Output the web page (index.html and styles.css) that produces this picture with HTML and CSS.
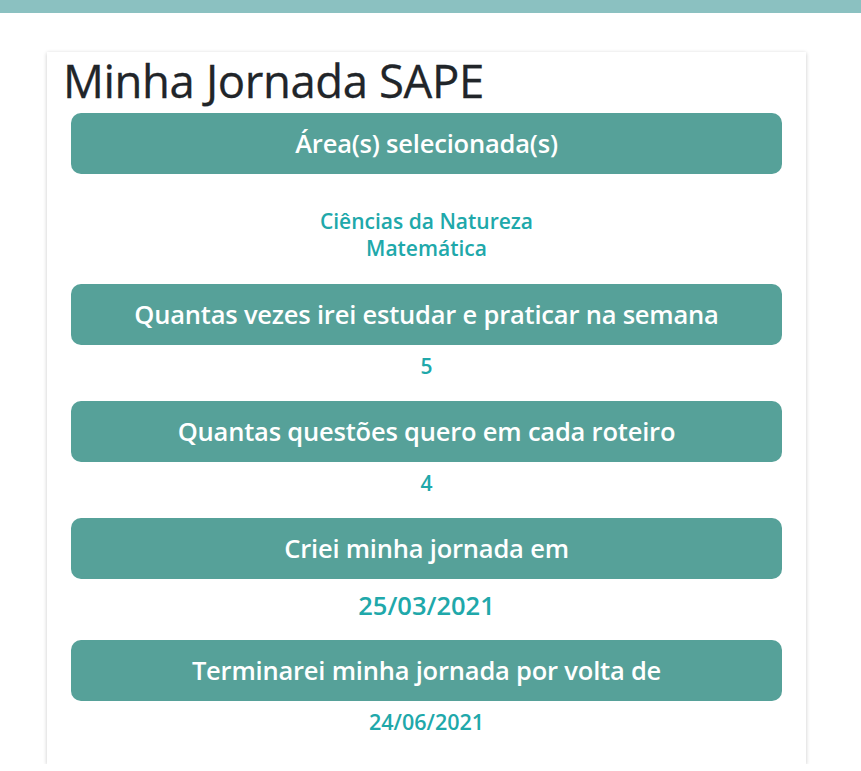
FILE: index.html
```html
<!DOCTYPE html>
<html lang="pt-BR">
<head>
<meta charset="utf-8">
<title>Minha Jornada SAPE</title>
<link rel="stylesheet" href="styles.css">
</head>
<body>
<div class="topbar"></div>
<main class="card">
  <h1 class="title">Minha Jornada SAPE</h1>
  <div class="bar">Área(s) selecionada(s)</div>
  <div class="value areas">Ciências da Natureza<br>Matemática</div>
  <div class="bar">Quantas vezes irei estudar e praticar na semana</div>
  <div class="value">5</div>
  <div class="bar">Quantas questões quero em cada roteiro</div>
  <div class="value">4</div>
  <div class="bar">Criei minha jornada em</div>
  <div class="value big">25/03/2021</div>
  <div class="bar">Terminarei minha jornada por volta de</div>
  <div class="value last">24/06/2021</div>
</main>
</body>
</html>
```
FILE: styles.css
```css
html, body {
  margin: 0;
  padding: 0;
  background: #fff;
  font-family: "Open Sans", "Noto Sans", sans-serif;
}
.topbar {
  height: 13px;
  background: #8bc1c1;
}
.card {
  margin: 39px 0 0 47px;
  width: 759px;
  box-sizing: border-box;
  padding: 4px 24px 28px;
  background: #fff;
  box-shadow: 0 1px 4px rgba(0,0,0,0.22);
}
.title {
  margin: 0 0 9px -8px;
  font-size: 45.5px;
  line-height: 48px;
  font-weight: 400;
  color: #212529;
  letter-spacing: -0.4px;
  -webkit-text-stroke: 0.3px #212529;
}
.bar {
  height: 61px;
  line-height: 61px;
  border-radius: 10px;
  background: #56a199;
  color: #fff;
  text-align: center;
  font-size: 25.5px;
  font-weight: 600;
  letter-spacing: -0.2px;
}
.value {
  margin: 7px 0 21px;
  line-height: 28px;
  text-align: center;
  color: #20a8aa;
  font-size: 21px;
  font-weight: 600;
}
.value.areas {
  margin: 34px 0 22px;
  line-height: 27px;
}
.value.big {
  font-size: 25.5px;
  line-height: 32px;
  margin: 10px 0 19px;
  font-weight: 600;
}
.value.last {
  font-size: 21.5px;
  margin-bottom: 0;
}
```
